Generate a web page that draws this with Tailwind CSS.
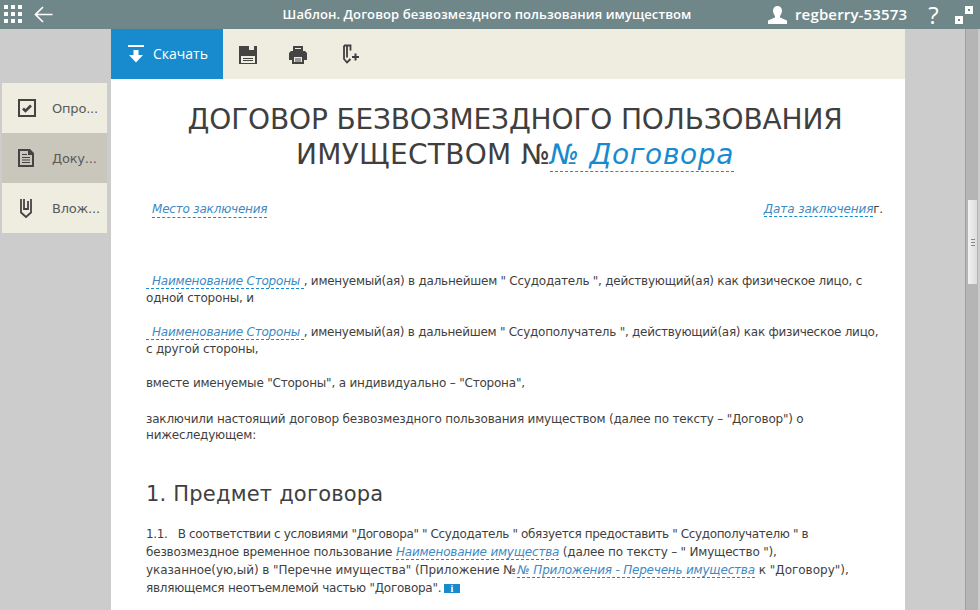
<!DOCTYPE html>
<html><head><meta charset="utf-8"><script src="https://cdn.jsdelivr.net/npm/@tailwindcss/browser@4"></script></head>
<body class="w-[980px] h-[610px] overflow-hidden bg-[#cccccc] font-['DejaVu_Sans',sans-serif] text-[#3f3f3f]">
<div class="relative h-[610px] overflow-hidden">
<header class="h-[29px] bg-[#6f8789] flex items-center text-white">
  <div class="flex items-center gap-[11px] pl-1 w-[260px]">
    <svg width="19" height="19" viewBox="0 0 19 19" fill="#fff"><rect x="0" y="0" width="4" height="4"/><rect x="7" y="0" width="4" height="4"/><rect x="14" y="0" width="4" height="4"/><rect x="0" y="7" width="4" height="4"/><rect x="7" y="7" width="4" height="4"/><rect x="14" y="7" width="4" height="4"/><rect x="0" y="14" width="4" height="4"/><rect x="7" y="14" width="4" height="4"/><rect x="14" y="14" width="4" height="4"/></svg>
    <svg width="19" height="17" viewBox="0 0 19 17" fill="none" stroke="#fff" stroke-width="1.7"><path d="M18.500 8.500H1.500M9 1 1.500 8.500 9 16"/></svg>
  </div>
  <div class="w-[460px] text-center text-[13px] font-['Open_Sans',sans-serif] font-semibold tracking-[0.08px] -ml-[3px]">Шаблон. Договор безвозмездного пользования имуществом</div>
  <div class="flex items-center ml-[51px]">
    <svg width="19" height="18" viewBox="0 0 19 18" fill="#fff"><path d="M5 4.500C5 2 7 0 9.500 0S14 2 14 4.500 12.800 9 12 10v1.500l7 3V18H0v-3.500l7-3V10C6.200 9 5 7 5 4.500z"/></svg>
    <span class="ml-[8px] text-[15px] font-['Open_Sans',sans-serif] font-semibold tracking-[0.15px]">regberry-53573</span>
    <span class="ml-[21px] text-[24px] leading-[29px] font-['Open_Sans',sans-serif]">?</span>
    <svg class="ml-[16px]" width="18" height="18" viewBox="0 0 18 18"><rect x="0" y="10" width="8" height="8" fill="#fff"/><rect x="3" y="13" width="2" height="2" fill="#6f8789"/><rect x="10" y="0" width="8" height="8" fill="#fff"/><rect x="13" y="3" width="2" height="2" fill="#6f8789"/></svg>
  </div>
</header>

<div class="flex">
  <aside class="w-[111px] pt-[54px] pl-[2px] shrink-0">
    <div class="w-[105px] bg-[#efece0] text-[13px] text-[#5a5a5a]">
      <div class="h-[50px] flex items-center">
        <svg class="ml-[16px]" width="18" height="18" viewBox="0 0 18 18"><rect x="1" y="1" width="16" height="16" fill="none" stroke="#444" stroke-width="2"/><path d="M5 9.500l2.500 2.500L13 6.500" fill="none" stroke="#444" stroke-width="2.600"/></svg>
        <span class="ml-[16px] tracking-[-0.2px] pt-[1px]">Опро...</span>
      </div>
      <div class="h-[50px] flex items-center bg-[#c9c7bb]">
        <svg class="ml-[16px]" width="16" height="18" viewBox="0 0 16 18"><path d="M1 1h9.500L15 5.500V17H1z" fill="none" stroke="#444" stroke-width="2"/><path d="M10 0h2l4 4v2h-6z" fill="#444"/><path d="M4 5.500h5M4 8.500h8M4 11h8M4 13.500h8" stroke="#444" stroke-width="1.200"/></svg>
        <span class="ml-[18px] tracking-[-0.2px] pt-[1px]">Доку...</span>
      </div>
      <div class="h-[50px] flex items-center">
        <svg class="ml-[18px]" width="12" height="21" viewBox="0 0 12 21" fill="none" stroke="#444" stroke-width="1.800"><path d="M1 1v13.500l5 4.500 5-4.500V1M4 1v10h4V3"/></svg>
        <span class="ml-[20px] tracking-[-0.2px] pt-[1px]">Влож...</span>
      </div>
    </div>
  </aside>

  <main class="w-[794px] shrink-0 h-[581px] bg-white overflow-hidden">
    <div class="h-[50px] bg-[#efece0] flex items-center">
      <div class="w-[112px] h-[50px] bg-[#178bce] text-white flex items-center">
        <svg class="ml-[17px]" width="16" height="18" viewBox="0 0 16 18" fill="#fff"><rect x="0" y="0" width="16" height="2"/><rect x="5.500" y="5" width="5" height="6"/><path d="M1 10h14L8 17.500z"/></svg>
        <span class="ml-[9px] text-[14px] font-['Open_Sans',sans-serif] -mt-[1px]">Скачать</span>
      </div>
      <svg class="ml-[16px]" width="18" height="19" viewBox="0 0 18 19"><path fill-rule="evenodd" fill="#444" d="M0 1h18v18H0zM10 1v4h5V1zM2 11v7h14v-7z"/><path d="M4 13.500h10M4 15.500h10" stroke="#444"/></svg>
      <svg class="ml-[32px]" width="18" height="19" viewBox="0 0 18 19" fill="#444"><path fill-rule="evenodd" d="M4 1h10v5H4zM6 3v1h6V3z"/><path fill-rule="evenodd" d="M2 6h14l2 2v7h-3v4H3v-4H0V8zM5 12v5h8v-5z"/><path d="M6 13.500h6v1H6zM6 15.500h6v1H6z"/></svg>
      <svg class="ml-[36px]" width="17" height="20" viewBox="0 0 17 20" fill="none" stroke="#3f3f3f" stroke-width="1.800"><path d="M1 1.500h6.500v5M1 1.500v13.500l3 3.500 3.500-3.500M4 1.500v12"/><path d="M9 13h7M12.500 9.500v7" stroke-width="2"/></svg>
    </div>

    <article class="pl-[35px] pr-[21px]">
      <h1 class="text-[28px] leading-[35px] tracking-[-0.15px] text-center text-[#3f3f3f] pt-[23px] whitespace-nowrap">ДОГОВОР БЕЗВОЗМЕЗДНОГО ПОЛЬЗОВАНИЯ<br><span class="tracking-[0.3px]">ИМУЩЕСТВОМ №</span><i class="text-[#178bce] border-b border-dashed border-[#178bce] tracking-[0.65px]">№ Договора</i></h1>
      <div class="flex justify-between text-[12px] leading-[16px] mt-[29px] pl-[6px] pr-[1px] tracking-[-0.2px]">
        <i class="text-[#3d8ac4] border-b border-dashed border-[#178bce]">Место заключения</i>
        <span><i class="text-[#3d8ac4] border-b border-dashed border-[#178bce] tracking-[-0.1px]">Дата заключения</i>г.</span>
      </div>
      <div class="text-[12px] leading-[16.500px] tracking-[-0.2px] whitespace-nowrap">
        <p class="mt-[55px]"><i class="text-[#3d8ac4] border-b border-dashed border-[#178bce] pl-[6px]">Наименование Стороны </i><span class="tracking-[-0.24px]">, именуемый(ая) в дальнейшем " Ссудодатель ", действующий(ая) как физическое лицо, с</span><br>одной стороны, и</p>
        <p class="mt-[18px]"><i class="text-[#3d8ac4] border-b border-dashed border-[#178bce] pl-[6px]">Наименование Стороны </i><span class="tracking-[-0.26px]">, именуемый(ая) в дальнейшем " Ссудополучатель ", действующий(ая) как физическое лицо,</span><br>с другой стороны,</p>
        <p class="mt-[18px]">вместе именуемые "Стороны", а индивидуально – "Сторона",</p>
        <p class="mt-[19px]">заключили настоящий договор безвозмездного пользования имуществом (далее по тексту – "Договор") о<br>нижеследующем:</p>
      </div>
      <h2 class="text-[21px] leading-[28px] mt-[36px] tracking-[0.2px]">1. Предмет договора</h2>
      <p class="text-[12px] leading-[18px] mt-[17px] tracking-[-0.2px] whitespace-nowrap"><span class="tracking-[-0.37px]">1.1.&nbsp;&nbsp; В соответствии с условиями "Договора" " Ссудодатель " обязуется предоставить " Ссудополучателю " в</span><br>безвозмездное временное пользование <i class="text-[#3d8ac4] border-b border-dashed border-[#178bce]">Наименование имущества</i> (далее по тексту – " Имущество "),<br><span class="tracking-[-0.06px]">указанное(ую,ый) в "Перечне имущества" (Приложение №</span> <i class="text-[#3d8ac4] border-b border-dashed border-[#178bce] -ml-[2px]">№ Приложения - Перечень имущества</i><span class="tracking-[0px]"> к "Договору"),</span><br><span class="tracking-[-0.25px]">являющемся неотъемлемой частью "Договора". </span><span class="inline-flex items-center justify-center w-[16px] h-[9px] -ml-[1px] bg-[#178bce] text-white text-[10px] font-bold leading-none align-[0px] font-['Liberation_Serif',serif]">i</span></p>
    </article>
  </main>

  <div class="ml-[60px] w-[13px] h-[581px] bg-[#b5b5b5] border-l border-[#a0a0a0] relative shrink-0">
    <div class="absolute left-[2px] top-[171px] w-[9px] h-[84px] bg-gradient-to-r from-[#f2f2f2] to-[#dcdcdc] flex flex-col items-center justify-center gap-[2px]">
      <div class="w-[4px] h-[1px] bg-[#888]"></div><div class="w-[4px] h-[1px] bg-[#888]"></div><div class="w-[4px] h-[1px] bg-[#888]"></div>
    </div>
  </div>
</div>
</div>
</body></html>
